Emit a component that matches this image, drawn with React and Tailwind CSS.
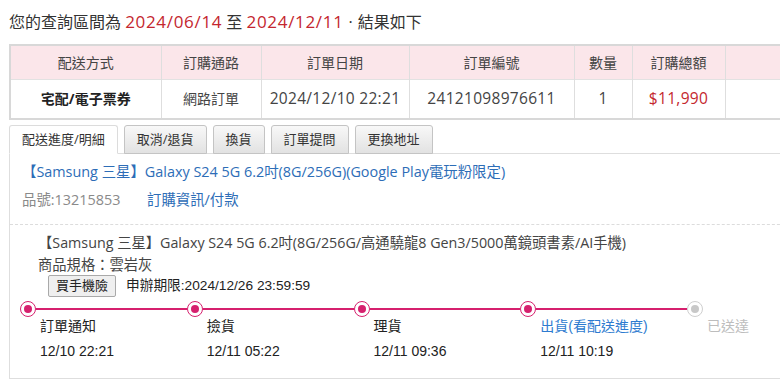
import React from "react";

const sans = "font-['Open_Sans','Noto_Sans_CJK_TC',sans-serif]";
const arial = "font-['Liberation_Sans','Noto_Sans_CJK_TC',sans-serif]";

const tabs = ["配送進度/明細", "取消/退貨", "換貨", "訂單提問", "更換地址"];

const steps = [
  { label: "訂單通知", time: "12/10 22:21", done: true },
  { label: "撿貨", time: "12/11 05:22", done: true },
  { label: "理貨", time: "12/11 09:36", done: true },
  { label: "出貨(看配送進度)", time: "12/11 10:19", done: true, link: true },
  { label: "已送達", time: "", done: false },
];

function Dot({ done }) {
  return (
    <span
      className={
        "flex h-4 w-4 shrink-0 items-center justify-center rounded-full border bg-white " +
        (done ? "border-[#d6206e]" : "border-[#cfcfcf]")
      }
    >
      <span className={"h-2 w-2 rounded-full " + (done ? "bg-[#d6206e]" : "bg-[#c8c8c8]")} />
    </span>
  );
}

export default function App() {
  return (
    <div className="h-[386px] w-[780px] overflow-hidden bg-white">
      <div className={"w-[820px] pl-[9px] text-[#333] " + sans}>
        <h1 className="pt-[10px] text-[16px] leading-6 font-normal">
          您的查詢區間為{" "}
          <span className="text-[17px] tracking-[0.04em] text-[#c4262e]">2024/06/14</span> 至{" "}
          <span className="text-[17px] tracking-[0.04em] text-[#c4262e]">2024/12/11</span>
          <span className="px-[5px]">·</span>結果如下
        </h1>

        <table className="mt-[10px] w-[811px] border-collapse border-2 border-[#d8d8d8] text-center text-[14px]">
          <thead>
            <tr className="h-[34px] bg-[#fbe6ea] text-[#444]">
              <th className="w-[151px] border-r border-[#dedede] font-normal">配送方式</th>
              <th className="w-[100px] border-r border-[#dedede] font-normal">訂購通路</th>
              <th className="w-[148px] border-r border-[#dedede] font-normal">訂單日期</th>
              <th className="w-[165px] border-r border-[#dedede] font-normal">訂單編號</th>
              <th className="w-[58px] border-r border-[#dedede] font-normal">數量</th>
              <th className="w-[93px] border-r border-[#dedede] font-normal">訂購總額</th>
              <th className="font-normal" />
            </tr>
          </thead>
          <tbody>
            <tr className="h-[40px] border-t border-[#e2e2e2] text-[#444]">
              <td className="border-r border-[#dedede] font-bold text-[#222]">宅配/電子票券</td>
              <td className="border-r border-[#dedede]">網路訂單</td>
              <td className="border-r border-[#dedede] text-[15.5px] tracking-[0.3px]">2024/12/10 22:21</td>
              <td className="border-r border-[#dedede] text-[15.5px] tracking-[0.3px]">24121098976611</td>
              <td className="border-r border-[#dedede] text-[15.5px]">1</td>
              <td className="border-r border-[#dedede] text-[15.5px] tracking-[0.3px] text-[#c4262e]">$11,990</td>
              <td />
            </tr>
          </tbody>
        </table>

        <div className="mt-[5px] -mb-px flex gap-[6px] text-[13px]">
          {tabs.map((t, i) => (
            <div
              key={t}
              className={
                "flex h-[29px] items-center rounded-t-[3px] border px-3 " +
                (i === 0
                  ? "border-[#dcdcdc] border-b-white bg-white text-[#333]"
                  : "border-[#c4c4c4] bg-linear-to-b from-[#f8f8f8] to-[#e2e2e2] text-[#333]")
              }
            >
              {t}
            </div>
          ))}
        </div>

        <div className="border-t border-l border-b border-[#dedede]">
          <div className="px-3 pt-2 pb-[14px] text-[14.4px] leading-5">
            <div className="text-[#2d6db7]">
              【Samsung 三星】Galaxy S24 5G 6.2吋(8G/256G)(Google Play電玩粉限定)
            </div>
            <div className="mt-2 flex">
              <span className="w-[125px] text-[#8a8a8a]">品號:13215853</span>
              <span className="text-[#2d6db7]">訂購資訊/付款</span>
            </div>
          </div>

          <div className="border-t border-dashed border-[#dcdcdc] pt-[7px] pb-[18px]">
            <div className="pl-[28px] text-[14.3px] text-[#444]">
              <div className="leading-[22px]">
                【Samsung 三星】Galaxy S24 5G 6.2吋(8G/256G/高通驍龍8 Gen3/5000萬鏡頭書素/AI手機)
              </div>
              <div className="h-[21px] leading-[21px]">商品規格：雲岩灰</div>
              <div className={"ml-[10px] flex items-center gap-[10px] " + arial}>
                <span className="flex h-[22px] items-center rounded-[2px] border border-[#a9a9a9] bg-[#efefef] px-[7px] text-[13px] text-[#222]">
                  買手機險
                </span>
                <span className="text-[13.7px] text-[#222]">申辦期限:2024/12/26 23:59:59</span>
              </div>
            </div>

            <div className={"mt-1 ml-[10px] flex " + arial}>
              {steps.map((s, i) => (
                <div key={s.label} className="w-[166.75px] shrink-0">
                  <div className="flex items-center">
                    <Dot done={s.done} />
                    {i < steps.length - 1 && <span className="h-[2px] flex-1 bg-[#d6206e]" />}
                  </div>
                  <div
                    className={
                      "pl-5 text-[14px] leading-[18px] " +
                      (s.link ? "text-[#2d7bd0]" : s.done ? "text-[#222]" : "text-[#bdbdbd]")
                    }
                  >
                    {s.label}
                  </div>
                  <div className="mt-[7px] h-[18px] pl-5 text-[14px] leading-[18px] text-[#222]">
                    {s.time}
                  </div>
                </div>
              ))}
            </div>
          </div>
        </div>
      </div>
    </div>
  );
}
